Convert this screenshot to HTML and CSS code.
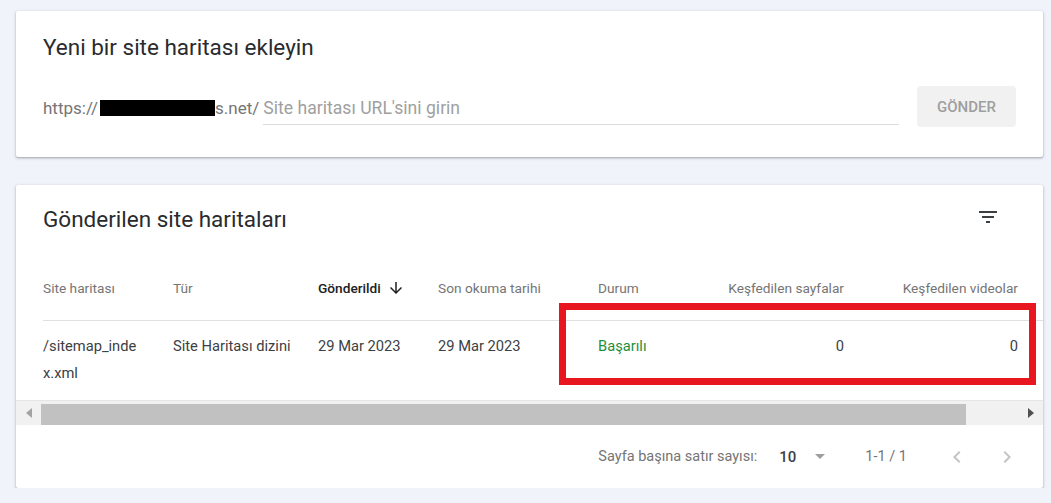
FILE: index.html
```html
<!DOCTYPE html>
<html lang="tr">
<head>
    <meta charset="UTF-8">
    <meta name="viewport" content="width=device-width, initial-scale=1.0">
    <title>Site haritaları</title>
    <link rel="stylesheet" href="styles.css">
</head>
<body>
    <!-- Add sitemap card -->
    <section class="card add-card">
        <h2 class="card-title">Yeni bir site haritası ekleyin</h2>
        <div class="add-row">
            <span class="prefix">https://<span class="redact"></span>s.net/</span>
            <div class="url-field">Site haritası URL'sini girin</div>
            <button class="send-btn">Gönder</button>
        </div>
    </section>

    <!-- Submitted sitemaps card -->
    <section class="card list-card">
        <div class="list-head">
            <h2 class="card-title">Gönderilen site haritaları</h2>
            <svg class="filter-icon" width="24" height="24" viewBox="0 0 24 24"><path d="M10 18h4v-2h-4v2zM3 6v2h18V6H3zm3 7h12v-2H6v2z"/></svg>
        </div>

        <div class="table-wrap">
            <div class="table">
                <div class="row head">
                    <div class="cell">Site haritası</div>
                    <div class="cell">Tür</div>
                    <div class="cell sorted">Gönderildi
                        <svg width="18" height="18" viewBox="0 0 24 24"><path d="M20 12l-1.41-1.41L13 16.17V4h-2v12.17l-5.58-5.59L4 12l8 8 8-8z"/></svg>
                    </div>
                    <div class="cell">Son okuma tarihi</div>
                    <div class="cell">Durum</div>
                    <div class="cell num">Keşfedilen sayfalar</div>
                    <div class="cell num">Keşfedilen videolar</div>
                    <div class="cell"></div>
                </div>
                <div class="row body">
                    <div class="cell path">/sitemap_index.xml</div>
                    <div class="cell">Site Haritası dizini</div>
                    <div class="cell">29 Mar 2023</div>
                    <div class="cell">29 Mar 2023</div>
                    <div class="cell ok">Başarılı</div>
                    <div class="cell num">0</div>
                    <div class="cell num">0</div>
                    <div class="cell"></div>
                </div>
            </div>
        </div>

        <!-- horizontal scrollbar -->
        <div class="hscroll">
            <span class="arrow left"></span>
            <span class="thumb"></span>
            <span class="track-rest"></span>
            <span class="arrow right"></span>
        </div>

        <div class="pager">
            <span class="pager-label">Sayfa başına satır sayısı:</span>
            <span class="pager-size">10</span>
            <span class="caret"></span>
            <span class="pager-range">1-1 / 1</span>
            <svg class="chev" width="24" height="24" viewBox="0 0 24 24"><path d="M15.41 7.41L14 6l-6 6 6 6 1.41-1.41L10.83 12z"/></svg>
            <svg class="chev" width="24" height="24" viewBox="0 0 24 24"><path d="M10 6L8.59 7.41 13.17 12l-4.58 4.59L10 18l6-6z"/></svg>
        </div>

        <div class="highlight"></div>
    </section>
</body>
</html>
```

FILE: styles.css
```css
body {
    margin: 0;
    padding: 11px 8px 0 16px;
    background-color: #f0f3fa;
    font-family: Roboto, "Liberation Sans", Arial, sans-serif;
    color: #202124;
}
.card {
    background-color: #fff;
    border-radius: 2px;
    box-shadow: 0 1px 2px rgba(60, 64, 67, 0.35), 0 1px 3px 1px rgba(60, 64, 67, 0.1);
}
.card-title {
    margin: 0;
    font-size: 22.5px;
    font-weight: 400;
    line-height: 28px;
    color: #2a2b2e;
}
/* Add sitemap */
.add-card {
    height: 146px;
    box-sizing: border-box;
    padding: 22px 27px 0 27px;
}
.add-row {
    display: flex;
    align-items: center;
    margin-top: 27px;
}
.prefix {
    font-size: 17px;
    color: #757575;
    display: flex;
    align-items: center;
}
.redact {
    display: inline-block;
    width: 115px;
    height: 16px;
    margin-left: 2px;
    background-color: #000;
}
.url-field {
    flex: 1;
    margin-left: 4px;
    margin-right: 18px;
    height: 35px;
    line-height: 37px;
    font-size: 17.6px;
    color: #a0a0a0;
    border-bottom: 1px solid #dadce0;
    box-sizing: border-box;
}
.send-btn {
    width: 99px;
    height: 41px;
    border: none;
    border-radius: 4px;
    background-color: #f1f1f1;
    color: #9e9e9e;
    font-family: inherit;
    font-size: 15px;
    font-weight: 500;
    text-transform: uppercase;
    margin-top: -2px;
}
/* Submitted sitemaps */
.list-card {
    position: relative;
    margin-top: 28px;
    height: 303px;
    overflow: hidden;
}
.list-head {
    display: flex;
    justify-content: space-between;
    align-items: center;
    padding: 20px 43px 0 27px;
}
.filter-icon {
    fill: #3c4043;
    margin-top: -4px;
}
.table-wrap {
    margin-top: 23px;
    overflow: hidden;
}
.table {
    padding-left: 27px;
    width: max-content;
}
.row {
    display: grid;
    grid-template-columns: 130px 145px 120px 160px 100px 146px 174px 120px;
}
.row.head {
    height: 64px;
    align-items: center;
    border-bottom: 1px solid #e0e0e0;
    font-size: 13.7px;
    color: #757575;
}
.row.body {
    height: 79px;
    box-sizing: border-box;
    padding-top: 12px;
    align-items: start;
    font-size: 14.7px;
    line-height: 27px;
    color: #3c4043;
}
.cell.num {
    text-align: right;
}
.cell.sorted {
    display: flex;
    align-items: center;
    gap: 6px;
    color: #202124;
    font-weight: 500;
}
.cell.sorted svg {
    fill: #202124;
}
.cell.path {
    word-break: break-all;
    padding-right: 34px;
}
.cell.ok {
    color: #1e8e3e;
}
.hscroll {
    display: flex;
    height: 25px;
    background-color: #f1f1f1;
    border-top: 1px solid #e6e6e6;
    box-sizing: border-box;
    align-items: center;
}
.arrow {
    width: 25px;
    height: 100%;
    display: flex;
    align-items: center;
    justify-content: center;
}
.arrow::before {
    content: "";
    border-top: 5px solid transparent;
    border-bottom: 5px solid transparent;
}
.arrow.left::before {
    border-right: 6px solid #a3a3a3;
}
.arrow.right::before {
    border-left: 6px solid #505050;
    margin-left: 1px;
}
.thumb {
    width: 925px;
    height: 21px;
    margin-top: 2px;
    background-color: #c1c1c1;
}
.track-rest {
    flex: 1;
}
.pager {
    display: flex;
    align-items: center;
    justify-content: flex-end;
    height: 63px;
    padding-right: 24px;
    font-size: 14.5px;
    color: #757575;
}
.pager-size {
    margin-left: 22px;
    font-size: 15px;
    font-weight: 500;
    color: #3c4043;
}
.caret {
    margin-left: 19px;
    border-left: 5px solid transparent;
    border-right: 5px solid transparent;
    border-top: 5px solid #9e9e9e;
}
.pager-range {
    margin-left: 40px;
    margin-right: 38px;
}
.chev {
    fill: #c4c4c4;
}
.chev + .chev {
    margin-left: 26px;
}
/* red annotation frame */
.highlight {
    position: absolute;
    left: 543px;
    top: 118px;
    width: 477px;
    height: 82px;
    box-sizing: border-box;
    border: 7px solid #e8161f;
}
```
